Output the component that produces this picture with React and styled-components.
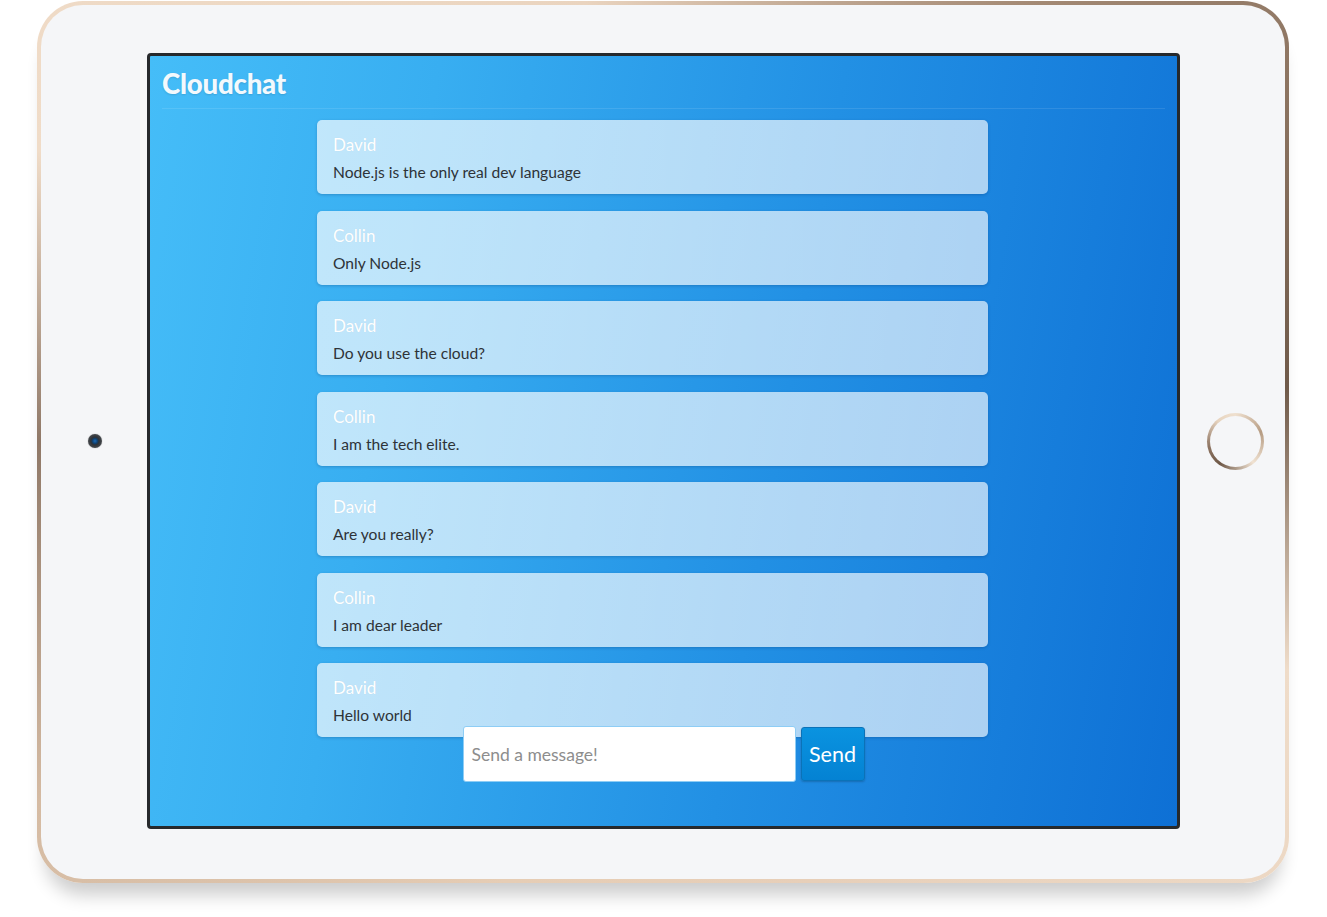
import React from 'react'
import styled, { createGlobalStyle } from 'styled-components'

// Global
const GlobalStyle = createGlobalStyle`
  html, body {
    margin: 0;
    padding: 0;
    background: #ffffff;
    font-family: Lato, "Open Sans", sans-serif;
  }
`

// Device frame
const Stage = styled.div`
  width: 1327px;
  height: 917px;
  padding: 1px 0 0 37px;
  box-sizing: border-box;
`

const Bezel = styled.div`
  width: 1252px;
  height: 882px;
  box-sizing: border-box;
  padding: 4px;
  border-radius: 46px;
  background: conic-gradient(
    from 200deg at 50% 50%,
    #e6cdb5 0deg,
    #d5bba3 40deg,
    #8f7867 70deg,
    #f0dcc8 95deg,
    #ead4bf 150deg,
    #a48a75 200deg,
    #6f5a4a 245deg,
    #efdcc9 270deg,
    #e7cfb9 320deg,
    #e6cdb5 360deg
  );
  box-shadow: 0 20px 18px -8px rgba(0, 0, 0, 0.2);
`

const Face = styled.div`
  height: 100%;
  border-radius: 42px;
  background: #f5f6f8;
  display: grid;
  grid-template-columns: 106px 1033px 105px;
  grid-template-rows: 776px;
  padding-top: 48px;
  box-sizing: border-box;
`

const Side = styled.div`
  display: flex;
  align-items: center;
  justify-content: center;
`

const Camera = styled.div`
  width: 14px;
  height: 14px;
  margin-left: 2px;
  border-radius: 50%;
  background: radial-gradient(circle at 50% 50%, #1a6ab8 0, #10406e 2.5px, #2f3236 4px, #45494d 7px);
  box-shadow: 0 0 1px rgba(0, 0, 0, 0.5);
`

const HomeButton = styled.div`
  width: 57px;
  height: 57px;
  margin-left: 5px;
  border-radius: 50%;
  padding: 3px;
  box-sizing: border-box;
  background: conic-gradient(from 0deg, #efe0cf 0deg, #b69c83 70deg, #f0e2d2 140deg, #6e5847 215deg, #8f7664 260deg, #e7d4bf 320deg, #efe0cf 360deg);
`

const HomeInner = styled.div`
  width: 100%;
  height: 100%;
  border-radius: 50%;
  background: #f5f6f8;
`

// Screen
const Screen = styled.div`
  border: 3px solid #26292c;
  border-radius: 4px;
  background: linear-gradient(100deg, #45bdf8 0%, #38aef1 25%, #2290e4 60%, #0e70d5 100%);
  display: flex;
  flex-direction: column;
  overflow: hidden;
`

const Header = styled.div`
  height: 52px;
  margin: 0 12px;
  display: flex;
  align-items: center;
  border-bottom: 1px solid rgba(255, 255, 255, 0.1);
`

const Title = styled.h1`
  margin: 3px 0 0;
  font-family: Lato, sans-serif;
  font-weight: 900;
  font-size: 27.6px;
  color: #f3f9fd;
  letter-spacing: -0.2px;
  text-shadow: 0 1px 2px rgba(0, 0, 0, 0.12);
`

const MessageList = styled.div`
  display: flex;
  flex-direction: column;
  gap: 16.5px;
  padding: 11px 189px 0 167px;
`

const Card = styled.div`
  height: 74px;
  box-sizing: border-box;
  padding: 14px 16px 0;
  border-radius: 5px;
  background: linear-gradient(90deg, rgba(255, 255, 255, 0.68), rgba(255, 255, 255, 0.64));
  box-shadow: 0 1px 3px rgba(0, 40, 90, 0.25);
`

const Author = styled.div`
  font-size: 17px;
  line-height: 22px;
  color: #ffffff;
  text-shadow: 0 0 1px rgba(0, 0, 0, 0.08);
`

const Body = styled.div`
  margin-top: 6px;
  font-size: 15.6px;
  line-height: 20px;
  color: #2e3338;
`

const Composer = styled.form`
  display: flex;
  justify-content: center;
  align-items: flex-start;
  gap: 5px;
  margin: -11px 0 0 0;
  position: relative;
`

const Input = styled.input`
  width: 333px;
  height: 56px;
  box-sizing: border-box;
  padding: 0 8px;
  border: 1px solid #8ecdf5;
  border-radius: 3px;
  background: #ffffff;
  font-family: Lato, sans-serif;
  font-size: 17.5px;
  color: #333;
  outline: none;
  &::placeholder {
    color: #8d8d8d;
  }
`

const SendButton = styled.button`
  width: 64px;
  height: 54px;
  margin-top: 1px;
  border: 1px solid #0b72b8;
  border-radius: 3px;
  background: linear-gradient(180deg, #0a93e0 0%, #0482d3 100%);
  color: #ffffff;
  font-family: Lato, sans-serif;
  font-size: 21.5px;
  box-shadow: 0 1px 2px rgba(0, 0, 0, 0.2);
  cursor: pointer;
`

const messages = [
  { author: 'David', text: 'Node.js is the only real dev language' },
  { author: 'Collin', text: 'Only Node.js' },
  { author: 'David', text: 'Do you use the cloud?' },
  { author: 'Collin', text: 'I am the tech elite.' },
  { author: 'David', text: 'Are you really?' },
  { author: 'Collin', text: 'I am dear leader' },
  { author: 'David', text: 'Hello world' },
]

const App = () => {
  return (
    <Stage>
      <GlobalStyle />
      <Bezel>
        <Face>
          <Side>
            <Camera />
          </Side>
          <Screen>
            <Header>
              <Title>Cloudchat</Title>
            </Header>
            <MessageList>
              {messages.map((m, i) => (
                <Card key={i}>
                  <Author>{m.author}</Author>
                  <Body>{m.text}</Body>
                </Card>
              ))}
            </MessageList>
            <Composer onSubmit={e => e.preventDefault()}>
              <Input placeholder="Send a message!" />
              <SendButton type="submit">Send</SendButton>
            </Composer>
          </Screen>
          <Side>
            <HomeButton>
              <HomeInner />
            </HomeButton>
          </Side>
        </Face>
      </Bezel>
    </Stage>
  )
}

export default App
